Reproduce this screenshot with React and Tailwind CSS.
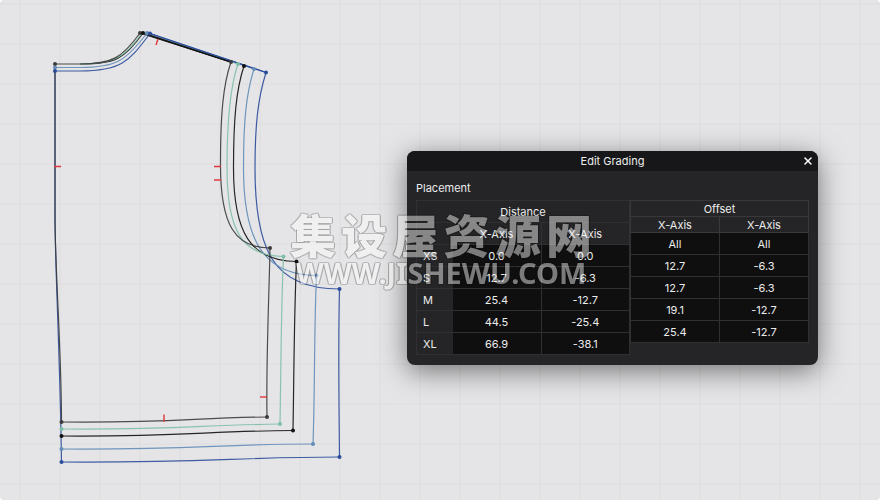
import React from "react";
import { X } from "lucide-react";

// one entry per graded size, drawn from the smallest to the largest
const SIZES = [
  {
    name: "XS",
    color: "#3b3b3b",
    neck: "M55 64 H80 C112 64 122 58 140 33",
    shoulder: "M140 33 L231 62",
    armhole: "M231 62 C223 85 220.5 115 220.5 165 C220.5 225 235 248 270 248",
    side: "M270 248 C269 300 266 360 267 417",
    hem: "M61.5 422 C175 423 190 418 267 417",
    center: "M55 64 V215 C55 270 61.5 350 61.5 422",
    points: [[55, 64], [140, 33], [231, 62], [270, 248], [267, 417], [61.5, 422]],
  },
  {
    name: "S",
    color: "#7fbfa6",
    neck: "M80 64 C112 64 124 59 142 33",
    shoulder: "M142 33 L238 64",
    armhole: "M238 64 C230 87 227 118 227 167 C227 230 241 256 283.5 256.5",
    side: "M283.5 256.5 C281 310 281 370 280 424",
    hem: "M61.5 429 C175 430 200 425 280 424",
    points: [[238, 64], [283.5, 256.5], [280, 424], [61.5, 429]],
  },
  {
    name: "M",
    color: "#111111",
    neck: "M80 64 C114 64 124 60 143 33",
    shoulder: "M143 33 L231 62",
    armhole: "M244 66 C236 90 233.5 120 233.5 168 C233.5 232 250 261 296.5 261.5",
    side: "M296.5 261.5 C294 315 294 375 293 430.5",
    hem: "M61.5 436 C175 437 210 431 293 430.5",
    points: [[143, 33], [244, 66], [296.5, 261.5], [293, 430.5], [61.5, 436]],
  },
  {
    name: "L",
    color: "#638db8",
    neck: "M55 67.5 H80 C116 67.5 126 61 147 33",
    shoulder: "M147 33 L254 69",
    armhole: "M254 69 C246 94 243.5 122 243.5 168 C243.5 238 262 275 316.5 275.5",
    side: "M316.5 275.5 C314 330 315 390 313 444",
    hem: "M61.5 449 C190 450 220 444 313 444",
    points: [[55, 67.5], [147, 33], [254, 69], [316.5, 275.5], [313, 444], [61.5, 449]],
  },
  {
    name: "XL",
    color: "#2b4c9b",
    neck: "M55 71 H80 C120 71 128 63 150 33.5",
    shoulder: "M150 33.5 L266 72.5",
    armhole: "M266 72.5 C258 98 255 125 255 168 C255 250 273 289 339.5 289",
    side: "M339.5 289 C338 345 339 400 339.5 457",
    hem: "M61.5 462 C200 463 240 457 339.5 457",
    center: "M55 71 V215 C55 270 60 350 61.5 462",
    points: [[55, 71], [150, 33.5], [266, 72.5], [339.5, 289], [339.5, 457], [61.5, 462]],
  },
];

// drawing order: larger sizes first, so the darker base lines stay on top
const DRAW_ORDER = [...SIZES].reverse();

const NOTCHES = ["M54 166.5 H61", "M214 166.5 H221", "M214 180 H221", "M158 39 L156 45", "M164 414.5 V422", "M260 397 H267"];

const DISTANCE = [
  { size: "XS", values: ["0.0", "0.0"] },
  { size: "S", values: ["12.7", "-6.3"] },
  { size: "M", values: ["25.4", "-12.7"] },
  { size: "L", values: ["44.5", "-25.4"] },
  { size: "XL", values: ["66.9", "-38.1"] },
];

const OFFSET = [
  ["All", "All"],
  ["12.7", "-6.3"],
  ["12.7", "-6.3"],
  ["19.1", "-12.7"],
  ["25.4", "-12.7"],
];

function PatternCanvas() {
  return (
    <svg className="absolute inset-0 h-full w-full" fill="none" aria-hidden="true">
      <defs>
        <pattern id="grid" width="40" height="40" patternUnits="userSpaceOnUse">
          <path d="M20 0 V40 M0 4 H40" stroke="#e0e0e2" strokeWidth="1.6" />
        </pattern>
      </defs>
      <rect width="100%" height="100%" fill="url(#grid)" />
      {DRAW_ORDER.map((s) => (
        <g key={s.name} stroke={s.color} strokeWidth="1.2" strokeOpacity="0.9">
          {s.center && <path d={s.center} />}
          <path d={s.neck} />
          <path d={s.shoulder} />
          <path d={s.armhole} />
          <path d={s.side} />
          <path d={s.hem} />
        </g>
      ))}
      <path d="M148 35 L231 62" stroke="#111111" strokeWidth="1.6" />
      <path d="M150 33.5 L266 72.5" stroke="#2b4c9b" strokeWidth="1.2" />
      {SIZES.map((s) =>
        s.points.map(([x, y]) => <circle key={`${s.name}-${x}-${y}`} cx={x} cy={y} r="2" fill={s.color} />)
      )}
      {NOTCHES.map((d) => (
        <path key={d} d={d} stroke="#e0393e" strokeWidth="1.4" />
      ))}
    </svg>
  );
}

function DistanceTable() {
  return (
    <table className="w-full table-fixed border-collapse border border-[#303032] text-center">
      <colgroup>
        <col className="w-9" />
        <col />
        <col />
      </colgroup>
      <thead>
        <tr className="h-[22px]">
          <th colSpan={3} scope="colgroup" className="border border-[#303032] p-0 font-normal">Distance</th>
        </tr>
        <tr className="h-[22px]">
          <td className="p-0" />
          <th scope="col" className="p-0 font-normal">X-Axis</th>
          <th scope="col" className="border border-[#303032] p-0 font-normal">X-Axis</th>
        </tr>
      </thead>
      <tbody>
        {DISTANCE.map((row) => (
          <tr key={row.size} className="h-[22px] border-y border-[#303032]">
            <th scope="row" className="p-0 pl-1.5 text-left font-normal">{row.size}</th>
            {row.values.map((v, i) => (
              <td key={i} className="border-r border-[#303032] bg-[#0f0f0f] p-0">{v}</td>
            ))}
          </tr>
        ))}
      </tbody>
    </table>
  );
}

function OffsetTable() {
  return (
    <table className="w-full table-fixed border-collapse text-center">
      <thead>
        <tr className="h-4">
          <th colSpan={2} scope="colgroup" className="border border-[#39393b] p-0 font-normal">Offset</th>
        </tr>
        <tr className="h-4">
          <th scope="col" className="border border-[#39393b] p-0 font-normal">X-Axis</th>
          <th scope="col" className="border border-[#39393b] p-0 font-normal">X-Axis</th>
        </tr>
      </thead>
      <tbody>
        {OFFSET.map((row, r) => (
          <tr key={r} className="h-[22px]">
            {row.map((v, i) => (
              <td key={i} className="border border-[#303032] bg-[#0f0f0f] p-0">{v}</td>
            ))}
          </tr>
        ))}
      </tbody>
    </table>
  );
}

function GradingWindow() {
  return (
    <section
      role="dialog"
      aria-labelledby="grading-title"
      className="absolute left-[407px] top-[151px] w-[411px] overflow-hidden rounded-lg bg-[#252527] text-[11px] leading-[14px] text-[#ececec] shadow-[0_6px_28px_rgba(0,0,0,0.5)]"
    >
      <header className="relative flex h-5 items-center justify-center bg-[#171719]">
        <h1 id="grading-title">Edit Grading</h1>
        <button type="button" aria-label="Close" className="absolute right-1 top-1 flex size-3 items-center justify-center text-white">
          <X className="size-3" strokeWidth={3} />
        </button>
      </header>
      <div className="px-[9px] pb-[10px] pt-[10px]">
        <h2 className="mb-[5px]">Placement</h2>
        <div className="grid grid-cols-[214px_1fr] items-start">
          <DistanceTable />
          <OffsetTable />
        </div>
      </div>
    </section>
  );
}

// half-transparent white letters with a thin dark outline
function Watermark() {
  return (
    <div className="pointer-events-none absolute left-[290px] top-[210px] w-[302px] select-none font-bold text-white opacity-45 [filter:drop-shadow(1px_0_0_#0006)_drop-shadow(-1px_0_0_#0006)_drop-shadow(0_1px_0_#0006)_drop-shadow(0_-1px_0_#0006)]">
      <div className="flex justify-between font-['Noto_Sans_CJK_SC',sans-serif] text-[46px] font-black leading-[46px]">
        {[..."集设屋资源网"].map((ch) => (
          <span key={ch}>{ch}</span>
        ))}
      </div>
      <div className="text-center font-['Noto_Sans',sans-serif] text-[29px] leading-[34px]">WWW.JISHEWU.COM</div>
    </div>
  );
}

export default function App() {
  return (
    <main className="min-h-screen bg-white font-['Inter',sans-serif]">
      <div className="relative min-h-screen overflow-hidden rounded bg-[#e5e5e7]">
        <PatternCanvas />
        <GradingWindow />
        <Watermark />
      </div>
    </main>
  );
}
